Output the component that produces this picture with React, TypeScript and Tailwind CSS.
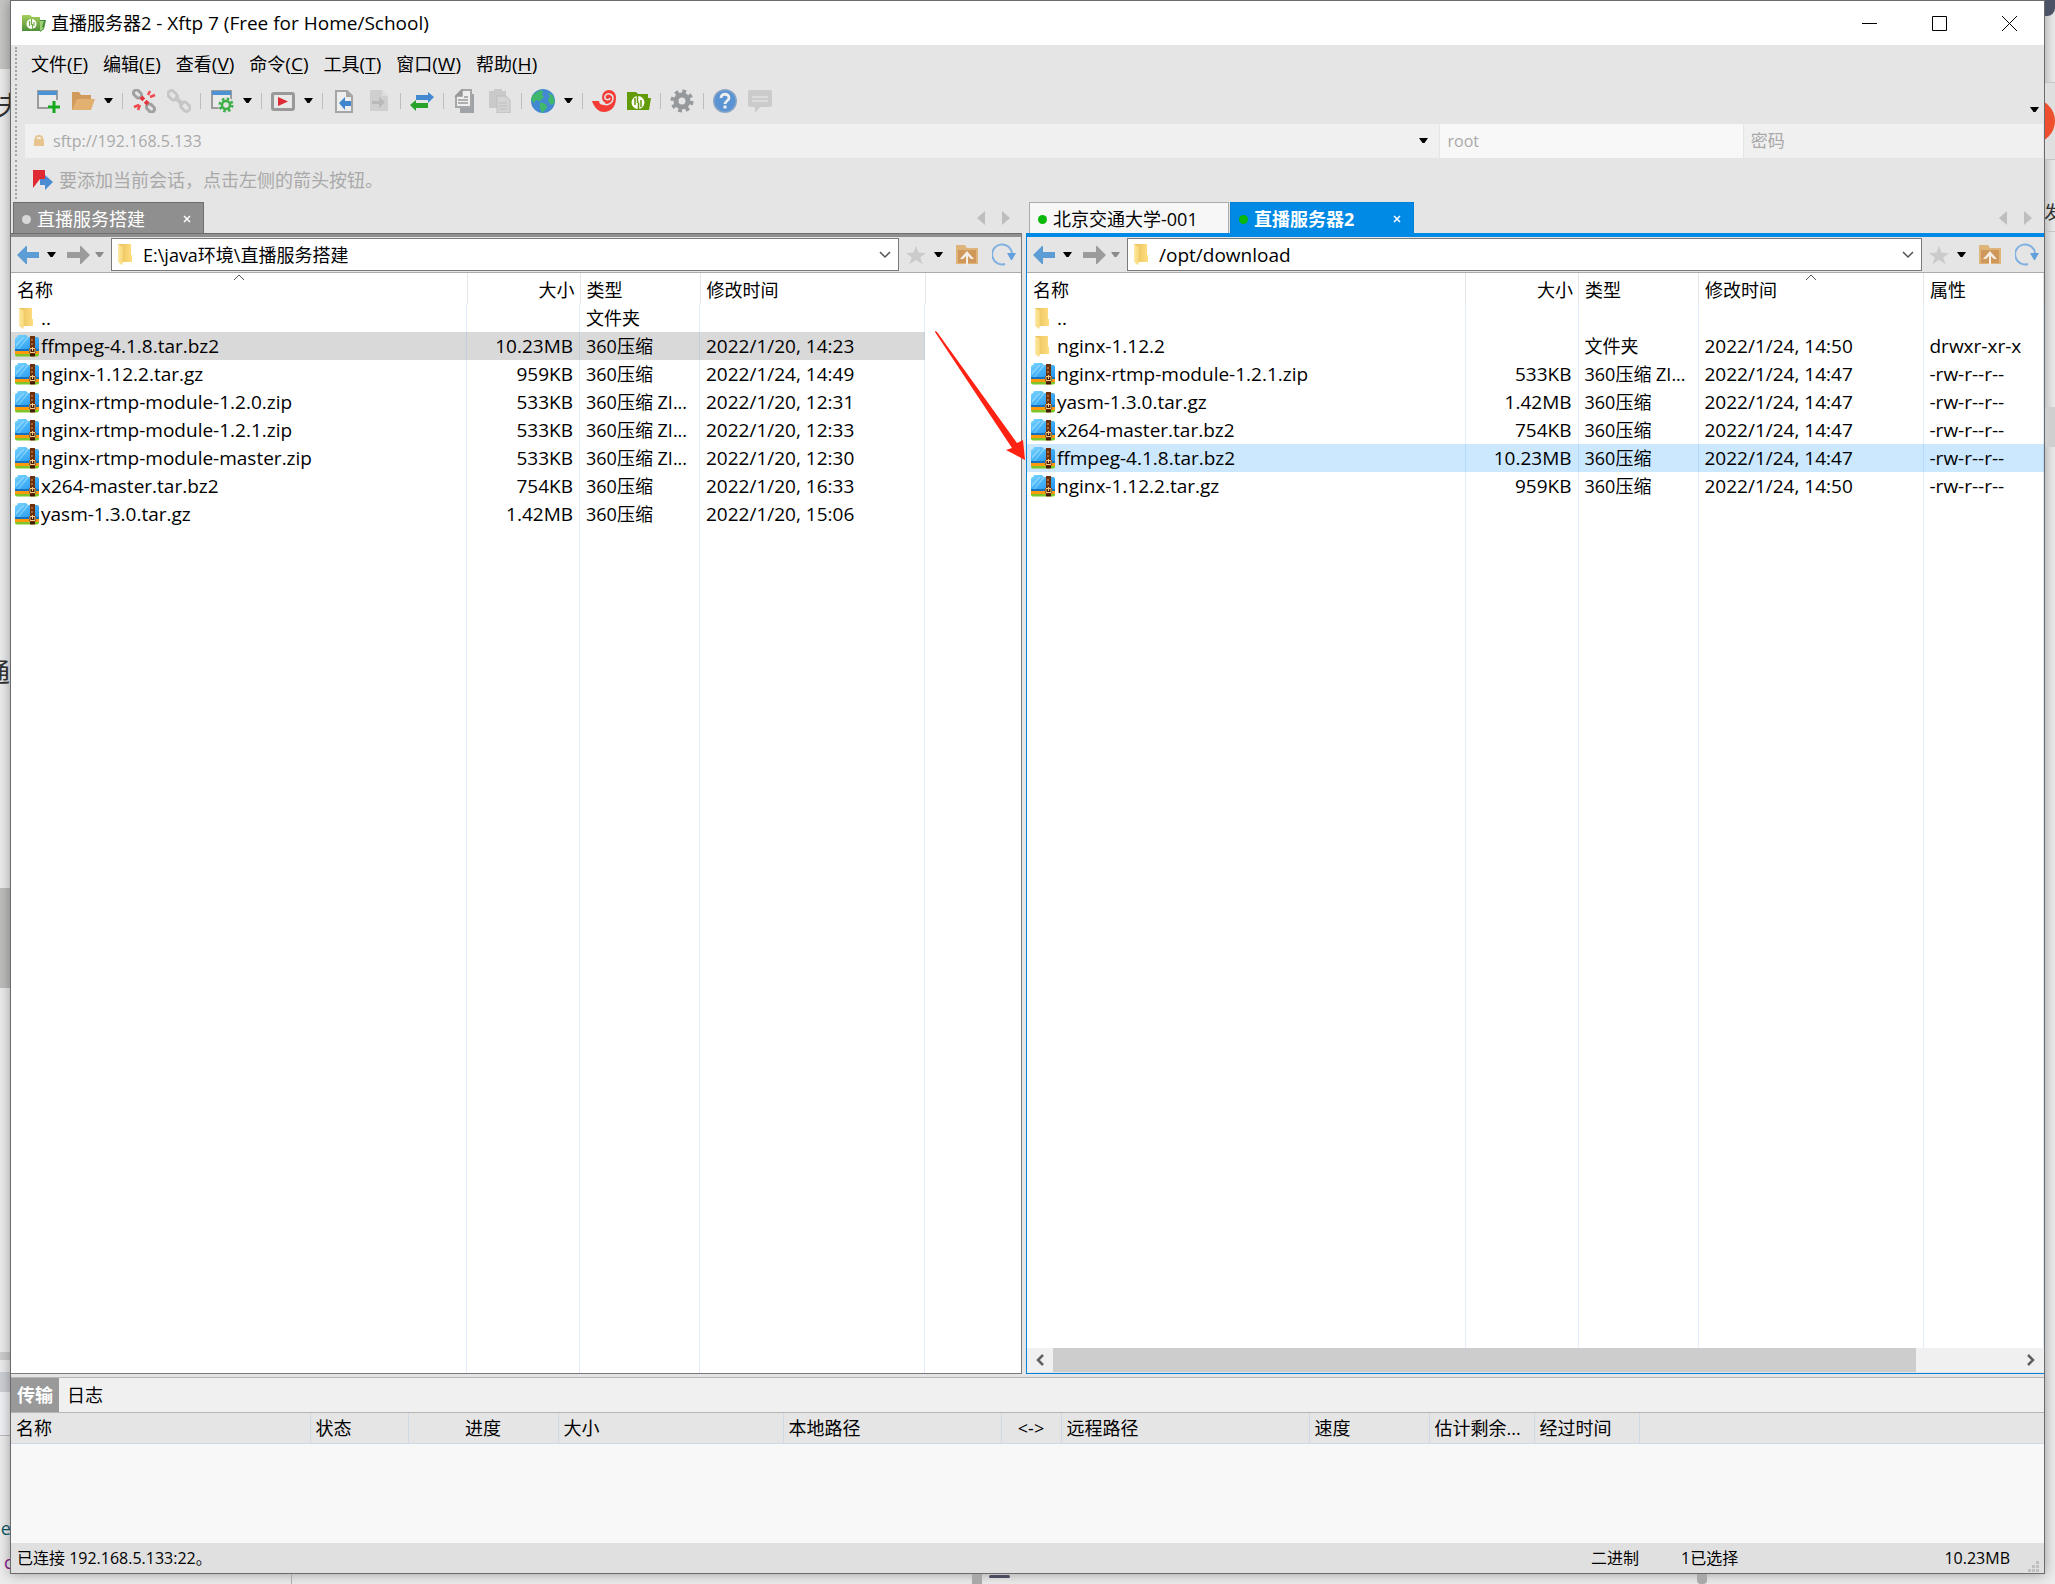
import type { ReactNode } from 'react';
import clsx from 'clsx';

type FileKind = 'folder' | 'archive';

interface FileEntry {
  name: string;
  kind: FileKind;
  size?: string;
  type?: string;
  modified?: string;
  attrs?: string;
  selected?: boolean;
}

const localFiles: FileEntry[] = [
  { name: '..', kind: 'folder', type: '文件夹' },
  { name: 'ffmpeg-4.1.8.tar.bz2', kind: 'archive', size: '10.23MB', type: '360压缩', modified: '2022/1/20, 14:23', selected: true },
  { name: 'nginx-1.12.2.tar.gz', kind: 'archive', size: '959KB', type: '360压缩', modified: '2022/1/24, 14:49' },
  { name: 'nginx-rtmp-module-1.2.0.zip', kind: 'archive', size: '533KB', type: '360压缩 ZI...', modified: '2022/1/20, 12:31' },
  { name: 'nginx-rtmp-module-1.2.1.zip', kind: 'archive', size: '533KB', type: '360压缩 ZI...', modified: '2022/1/20, 12:33' },
  { name: 'nginx-rtmp-module-master.zip', kind: 'archive', size: '533KB', type: '360压缩 ZI...', modified: '2022/1/20, 12:30' },
  { name: 'x264-master.tar.bz2', kind: 'archive', size: '754KB', type: '360压缩', modified: '2022/1/20, 16:33' },
  { name: 'yasm-1.3.0.tar.gz', kind: 'archive', size: '1.42MB', type: '360压缩', modified: '2022/1/20, 15:06' },
];

const remoteFiles: FileEntry[] = [
  { name: '..', kind: 'folder' },
  { name: 'nginx-1.12.2', kind: 'folder', type: '文件夹', modified: '2022/1/24, 14:50', attrs: 'drwxr-xr-x' },
  { name: 'nginx-rtmp-module-1.2.1.zip', kind: 'archive', size: '533KB', type: '360压缩 ZI...', modified: '2022/1/24, 14:47', attrs: '-rw-r--r--' },
  { name: 'yasm-1.3.0.tar.gz', kind: 'archive', size: '1.42MB', type: '360压缩', modified: '2022/1/24, 14:47', attrs: '-rw-r--r--' },
  { name: 'x264-master.tar.bz2', kind: 'archive', size: '754KB', type: '360压缩', modified: '2022/1/24, 14:47', attrs: '-rw-r--r--' },
  { name: 'ffmpeg-4.1.8.tar.bz2', kind: 'archive', size: '10.23MB', type: '360压缩', modified: '2022/1/24, 14:47', attrs: '-rw-r--r--', selected: true },
  { name: 'nginx-1.12.2.tar.gz', kind: 'archive', size: '959KB', type: '360压缩', modified: '2022/1/24, 14:50', attrs: '-rw-r--r--' },
];

const menus = [
  { label: '文件', accessKey: 'F' },
  { label: '编辑', accessKey: 'E' },
  { label: '查看', accessKey: 'V' },
  { label: '命令', accessKey: 'C' },
  { label: '工具', accessKey: 'T' },
  { label: '窗口', accessKey: 'W' },
  { label: '帮助', accessKey: 'H' },
];

const transferColumns = [
  { label: '名称', width: 'w-[299px]' },
  { label: '状态', width: 'w-[98px]' },
  { label: '进度', width: 'w-[150px]', center: true },
  { label: '大小', width: 'w-[225px]' },
  { label: '本地路径', width: 'w-[218px]' },
  { label: '<->', width: 'w-[60px]', center: true },
  { label: '远程路径', width: 'w-[248px]' },
  { label: '速度', width: 'w-[120px]' },
  { label: '估计剩余...', width: 'w-[105px]' },
  { label: '经过时间', width: 'w-[105px]' },
];

/* ---------- icons ---------- */

function Icon({ children, className = 'h-6 w-6' }: { children: ReactNode; className?: string }) {
  return (
    <svg viewBox="0 0 24 24" className={clsx('shrink-0', className)} aria-hidden="true">
      {children}
    </svg>
  );
}

function SharedGradients() {
  return (
    <svg className="absolute h-0 w-0" aria-hidden="true">
      <defs>
        <linearGradient id="folder-front" x1="0" x2="1">
          <stop offset="0" stopColor="#ffeaa6" />
          <stop offset="1" stopColor="#f6d574" />
        </linearGradient>
        <linearGradient id="folder-back" x1="0" x2="1">
          <stop offset="0" stopColor="#e8bf58" />
          <stop offset="1" stopColor="#ffdd80" />
        </linearGradient>
        <linearGradient id="zip-blue" x1="0" y1="0" x2="1" y2="1">
          <stop offset="0" stopColor="#7dd6ff" />
          <stop offset="0.5" stopColor="#45b2f7" />
          <stop offset="1" stopColor="#2393ee" />
        </linearGradient>
        <linearGradient id="app-green" x1="0" y1="0" x2="0" y2="1">
          <stop offset="0" stopColor="#a5cf5a" />
          <stop offset="1" stopColor="#4f8f3a" />
        </linearGradient>
      </defs>
    </svg>
  );
}

function FolderIcon() {
  return (
    <svg viewBox="0 0 15 21" className="h-[21px] w-[15px] shrink-0" aria-hidden="true">
      <path d="M0 0h13v11h1v7H4z" fill="url(#folder-back)" />
      <path d="M0 0l5 3v15l-1 3-4-3z" fill="url(#folder-front)" />
    </svg>
  );
}

function ArchiveIcon() {
  return (
    <svg viewBox="0 0 24 22" className="h-[22px] w-6 shrink-0" aria-hidden="true">
      <path d="M0 18h24v1.500a2 2 0 0 1-2 2H2a2 2 0 0 1-2-2z" fill="#7cc52b" />
      <path d="M0 15h24v4H0z" fill="#ff9a0c" />
      <path d="M0 14h24v2H0z" fill="#1670bd" />
      <path d="M2 2l1-2h8l2 2h9a2 2 0 0 1 2 2v10H0V4a2 2 0 0 1 2-2z" fill="url(#zip-blue)" />
      <path d="M10 2L1 12V9l7-7zM14 2L4 14H3L12 2z" fill="#a5e2ff" opacity="0.6" />
      <path d="M15 1h5v20.500h-5z" fill="#6e2f0b" />
      <path d="M16 4h2v2h-2zM16 8h2v2h-2z" fill="#a86536" />
      <path d="M14 13h7v5h-7z" fill="#4a1c05" />
      <path d="M15 13.500h5v4h-5zM17.500 12v4" fill="none" stroke="#f5d088" />
      <path d="M15 19h5v2h-5z" fill="#431803" />
    </svg>
  );
}

function AppIcon() {
  return (
    <Icon>
      <path d="M0 5a1 1 0 0 1 1-1h7l2 2h8v14H0z" fill="url(#app-green)" />
      <path d="M18 9h6l-2 9-4 3z" fill="#3f8b34" />
      <path d="M18 10h4l-2 6 2 1-4 3z" fill="#9fd077" />
      <circle cx="9.500" cy="13" r="5" fill="#fff" />
      <path d="M7.500 10v5M9.500 8v6M10.500 13v5M12 11v4" stroke="#72a946" strokeWidth="1.200" />
    </Icon>
  );
}

function NewSessionIcon() {
  return (
    <Icon>
      <rect x="2" y="2" width="19" height="17" fill="#eaeaea" stroke="#9b9b9b" strokeWidth="2" />
      <path d="M2 2h19v4H2z" fill="#4c93d3" />
      <path d="M14 11h10v13H12v-8z" fill="#e5e5e5" />
      <path d="M18 12v12M12 18h12" stroke="#16a920" strokeWidth="3" />
    </Icon>
  );
}

function OpenFolderIcon() {
  return (
    <Icon>
      <path d="M1 3h7l2 3h10v15H1z" fill="#d19c5b" />
      <path d="M6 10h18l-4 11H1z" fill="#e2b06f" />
    </Icon>
  );
}

function DisconnectIcon() {
  return (
    <Icon>
      <rect x="1" y="2" width="9" height="6" rx="3" transform="rotate(45 5.500 5)" fill="none" stroke="#a0a0a0" strokeWidth="3" />
      <rect x="14" y="16" width="9" height="6" rx="3" transform="rotate(45 18.500 19)" fill="none" stroke="#a0a0a0" strokeWidth="3" />
      <path d="M9 8l7 7" stroke="#e5343b" strokeWidth="4" strokeDasharray="4 2" />
      <path d="M16 6l2-4M18 8l5-2M8 16l-2 5M7 16l-5 2" stroke="#ee4a4f" strokeWidth="2.500" />
    </Icon>
  );
}

function ReconnectIcon() {
  return (
    <Icon>
      <rect x="1" y="3" width="10" height="7" rx="3" transform="rotate(45 6 6)" fill="none" stroke="#c6c6c6" strokeWidth="3" />
      <rect x="13" y="14" width="10" height="7" rx="3" transform="rotate(45 18 18)" fill="none" stroke="#c6c6c6" strokeWidth="3" />
      <path d="M8 8l8 8" stroke="#c6c6c6" strokeWidth="4" />
    </Icon>
  );
}

function SessionPropertiesIcon() {
  return (
    <Icon>
      <rect x="2" y="2" width="19" height="17" fill="#eaeaea" stroke="#9b9b9b" strokeWidth="2" />
      <path d="M2 2h19v4H2z" fill="#4c93d3" />
      <circle cx="16" cy="16" r="8" fill="#e5e5e5" />
      <circle cx="16" cy="16" r="4" fill="#e5e5e5" stroke="#3fb049" strokeWidth="2.500" />
      <circle cx="16" cy="16" r="6" fill="none" stroke="#3fb049" strokeWidth="3" strokeDasharray="2.400 2.310" />
    </Icon>
  );
}

function PlayIcon() {
  return (
    <Icon>
      <rect x="1.500" y="4.500" width="21" height="16" rx="1.500" fill="#e8e8e8" stroke="#999" strokeWidth="3" />
      <path d="M7 8l10 4.500L7 17z" fill="#e02a33" />
    </Icon>
  );
}

function DocLeftIcon() {
  return (
    <Icon>
      <path d="M4 2h11l5 5v16H4z" fill="#eee" stroke="#a5a5a5" strokeWidth="2" />
      <path d="M14 2v6h6z" fill="#a5a5a5" />
      <path d="M7 14l6-6v4h6v5h-6v4z" fill="#3f86cf" />
    </Icon>
  );
}

function DocRightIcon() {
  return (
    <Icon>
      <path d="M3 1h12l6 6v15H3z" fill="#cfcfcf" />
      <path d="M15 1v6h6z" fill="#dedede" />
      <path d="M18 13l-6-5v4H5v3h7v4z" fill="#b9b9b9" />
    </Icon>
  );
}

function TransferIcon() {
  return (
    <Icon>
      <path d="M24 8l-6-5v3H6v5h12v3z" fill="#4389d1" />
      <path d="M0 16l6-5v3h12v5H6v3z" fill="#27a22b" />
    </Icon>
  );
}

function CopyIcon() {
  return (
    <Icon>
      <path d="M7 5h14v19H7z" fill="#9fa2a6" />
      <path d="M9 1h9v17H3V7z" fill="#eee" stroke="#a4a6a8" strokeWidth="2" />
      <path d="M9 1v6H3zM5 11h10M5 14h10M11 8h4" stroke="#999" strokeWidth="1.500" fill="#999" />
    </Icon>
  );
}

function PasteIcon() {
  return (
    <Icon>
      <path d="M1 2h5V0h8v2h4v17H1z" fill="#c9c9c9" />
      <path d="M9 7h9l4 4v13H9z" fill="#d4d4d4" stroke="#bdbdbd" />
      <path d="M11 14h8M11 17h8M11 20h8" stroke="#bdbdbd" />
    </Icon>
  );
}

function GlobeIcon() {
  return (
    <Icon>
      <circle cx="12" cy="12" r="12" fill="#4389d1" />
      <path d="M3 5l6-4 3 1-1 4 2 2-4 4-4-1-2 3-3-3 1-4zM17 3l5 4 2 6-3 3-3-2-1-4 2-2zM9 13l6 2 1 4-5 5-2-5z" fill="#3fb86b" />
    </Icon>
  );
}

function SwirlIcon() {
  return (
    <Icon>
      <path d="M0 12h7c0 3 3 5 6 3l10-9c3 9-3 17-11 17C6 23 2 18 0 12z" fill="#f43c37" />
      <circle cx="17" cy="8" r="7" fill="#f43c37" />
      <path d="M10 14c5 4 11 0 11-5 0-4-6-6-8-2-1 4 4 5 5 2" fill="none" stroke="#e5e5e5" strokeWidth="1.500" />
    </Icon>
  );
}

function XftpIcon() {
  return (
    <Icon>
      <path d="M0 3h9l2 2h10v4h3l-2 12H0z" fill="#639a08" />
      <circle cx="11" cy="13.500" r="6.500" fill="#fff" />
      <path d="M8 9v7M10.500 7v7M11.500 13.500v7M14 11v7" stroke="#639a08" strokeWidth="1.500" />
    </Icon>
  );
}

function GearIcon() {
  return (
    <Icon>
      <circle cx="12" cy="12" r="6" fill="none" stroke="#96999c" strokeWidth="5" />
      <circle cx="12" cy="12" r="9.500" fill="none" stroke="#96999c" strokeWidth="4" strokeDasharray="3.700 3.760" />
    </Icon>
  );
}

function HelpIcon() {
  return (
    <Icon>
      <circle cx="12" cy="12" r="12" fill="#8ba6c4" />
      <circle cx="12" cy="12" r="10.500" fill="#5b94d4" />
      <path d="M8 9c0-5 8-5 8 0 0 3-4 3-4 6" fill="none" stroke="#eee" strokeWidth="2.800" />
      <path d="M10.500 16.500h3v3h-3z" fill="#eee" />
    </Icon>
  );
}

function MessageIcon() {
  return (
    <Icon>
      <path d="M2 1h20a2 2 0 0 1 2 2v13a2 2 0 0 1-2 2H12l-5 6v-6H2a2 2 0 0 1-2-2V3a2 2 0 0 1 2-2z" fill="#cbcbcb" />
      <path d="M4 8h16M4 12h16" stroke="#dcdcdc" strokeWidth="2" />
    </Icon>
  );
}

function Caret({ className = 'text-black' }: { className?: string }) {
  return (
    <svg viewBox="0 0 10 6" className={clsx('h-[6px] w-[10px] shrink-0', className)} aria-hidden="true">
      <path d="M0 0h9L5.500 5h-2z" fill="currentColor" />
    </svg>
  );
}

function BackIcon() {
  return (
    <svg viewBox="0 0 22 18" className="h-[18px] w-[22px]" aria-hidden="true">
      <path d="M0 9l9-9h1v6h12v6H10v6H9z" fill="#5c9dd5" />
    </svg>
  );
}

function ForwardIcon() {
  return (
    <svg viewBox="0 0 23 18" className="h-[18px] w-[23px]" aria-hidden="true">
      <path d="M23 9l-9-9h-1v6H0v6h13v6h1z" fill="#9b9b9b" />
    </svg>
  );
}

function StarIcon() {
  return (
    <Icon className="h-5 w-5">
      <path d="M12 1l3 8 9 1-7 5 3 8-8-5-8 5 3-8-7-5 9-1z" fill="#cbcbcb" />
    </Icon>
  );
}

function FolderUpIcon() {
  return (
    <svg viewBox="0 0 22 20" className="h-5 w-[22px]" aria-hidden="true">
      <path d="M0 0h9l2 3h11v16H0z" fill="#dfb47a" />
      <path d="M2 5h18v13H2z" fill="#d0975a" />
      <path d="M11 6l7 8h-3l-3-3v9h-2v-9l-3 3H4z" fill="#f3eee6" />
    </svg>
  );
}

function RefreshIcon() {
  return (
    <Icon className="h-6 w-6">
      <path d="M13 21a10 10 0 1 1 7-11" fill="none" stroke="#7fb0e0" strokeWidth="2" />
      <path d="M15 10h9l-4 7h-1z" fill="#61a0dd" />
    </Icon>
  );
}

/* ---------- toolbar ---------- */

function Grip() {
  return <span className="my-[2px] ml-1 w-0 shrink-0 self-stretch border-l-2 border-dotted border-[#a3a3a3]" />;
}

function ToolGroup({ children, last }: { children: ReactNode; last?: boolean }) {
  return (
    <div className="flex items-center">
      <div className="flex items-center gap-[11px]">{children}</div>
      {!last && <span className="mx-[9px] h-4 w-px bg-[#bdbdbd]" />}
    </div>
  );
}

function ToolButton({ label, menu, children }: { label: string; menu?: boolean; children: ReactNode }) {
  return (
    <button type="button" title={label} className="flex h-6 items-center">
      {children}
      {menu && (
        <span className="-mr-px flex w-[19px] justify-end">
          <Caret />
        </span>
      )}
    </button>
  );
}

function Toolbar() {
  return (
    <div className="flex h-[42px]">
      <Grip />
      <div className="flex flex-1 items-center pb-1 pl-[19px]">
        <ToolGroup>
          <ToolButton label="新建"><NewSessionIcon /></ToolButton>
          <ToolButton label="打开" menu><OpenFolderIcon /></ToolButton>
        </ToolGroup>
        <ToolGroup>
          <ToolButton label="断开"><DisconnectIcon /></ToolButton>
          <ToolButton label="重新连接"><ReconnectIcon /></ToolButton>
        </ToolGroup>
        <ToolGroup>
          <ToolButton label="会话属性" menu><SessionPropertiesIcon /></ToolButton>
        </ToolGroup>
        <ToolGroup>
          <ToolButton label="运行" menu><PlayIcon /></ToolButton>
        </ToolGroup>
        <ToolGroup>
          <ToolButton label="传输到左侧"><DocLeftIcon /></ToolButton>
          <ToolButton label="传输到右侧"><DocRightIcon /></ToolButton>
        </ToolGroup>
        <ToolGroup>
          <ToolButton label="同步"><TransferIcon /></ToolButton>
        </ToolGroup>
        <ToolGroup>
          <ToolButton label="复制"><CopyIcon /></ToolButton>
          <ToolButton label="粘贴"><PasteIcon /></ToolButton>
        </ToolGroup>
        <ToolGroup>
          <ToolButton label="编码" menu><GlobeIcon /></ToolButton>
        </ToolGroup>
        <ToolGroup>
          <ToolButton label="Xshell"><SwirlIcon /></ToolButton>
          <ToolButton label="Xftp"><XftpIcon /></ToolButton>
        </ToolGroup>
        <ToolGroup>
          <ToolButton label="选项"><GearIcon /></ToolButton>
        </ToolGroup>
        <ToolGroup last>
          <ToolButton label="帮助"><HelpIcon /></ToolButton>
          <ToolButton label="反馈"><MessageIcon /></ToolButton>
        </ToolGroup>
      </div>
      <button type="button" title="更多" className="self-end px-1 pb-[11px]">
        <Caret />
      </button>
    </div>
  );
}

function AddressBar() {
  return (
    <div className="flex h-[34px] text-[16px] text-[#a9a9a9]">
      <Grip />
      <div className="ml-2 mr-px flex flex-1 gap-px">
        <div className="flex flex-[1418] items-center bg-[#f0f0f0] pl-[9px] pr-[10px]">
          <svg viewBox="0 0 10 12" className="h-3 w-[10px]" aria-hidden="true">
            <path d="M2 5V3a3 2 0 0 1 6 0v2" fill="none" stroke="#e8c48f" strokeWidth="2" />
            <path d="M0 4h10v7H0z" fill="#e8c48f" />
          </svg>
          <input aria-label="主机地址" defaultValue="sftp://192.168.5.133" className="ml-[9px] min-w-0 flex-1 bg-transparent outline-none" />
          <button type="button" title="历史记录">
            <Caret />
          </button>
        </div>
        <input aria-label="用户名" defaultValue="root" className="min-w-0 flex-[300] bg-[#f8f8f8] pl-[7px] outline-none" />
        <input
          aria-label="密码"
          type="password"
          placeholder="密码"
          className="min-w-0 flex-[297] bg-[#f0f0f0] pl-[7px] text-[17px] outline-none placeholder:text-[#a9a9a9]"
        />
      </div>
    </div>
  );
}

/* ---------- file panes ---------- */

interface Tab {
  title: string;
  active?: boolean;
}

function TabArrows() {
  return (
    <div className="ml-auto flex items-center gap-[17px] pr-3">
      <button type="button" title="上一个标签">
        <svg viewBox="0 0 8 14" className="h-[14px] w-2" aria-hidden="true"><path d="M8 0v14L0 7z" fill="#bebebe" /></svg>
      </button>
      <button type="button" title="下一个标签">
        <svg viewBox="0 0 8 14" className="h-[14px] w-2" aria-hidden="true"><path d="M0 0v14l8-7z" fill="#bebebe" /></svg>
      </button>
    </div>
  );
}

function TabStrip({ tabs, remote }: { tabs: Tab[]; remote?: boolean }) {
  return (
    <div className={clsx('flex h-[31px] gap-px', remote ? 'pl-[3px]' : 'pl-[2px]')}>
      {tabs.map((tab) => (
        <button
          key={tab.title}
          type="button"
          className={clsx(
            'flex items-center border border-b-0 pl-2 pt-[2px] text-left',
            !remote && 'w-[191px] border-[#6e6e6e] bg-[#8f8f8f] text-white',
            remote && tab.active && 'w-[184px] border-[#007fd4] bg-[#008ae5] font-bold text-white',
            remote && !tab.active && 'w-[200px] border-[#ababab] bg-[#f7f7f7]',
          )}
        >
          <span className={clsx('h-[9px] w-[9px] rounded-full', remote ? 'bg-[#0ab80a]' : 'bg-[#d8d8d8]')} />
          <span className="ml-[6px]">{tab.title}</span>
          {tab.active && (
            <svg viewBox="0 0 8 8" className="ml-auto mr-3 h-2 w-2" aria-hidden="true">
              <path d="M1 1l6 6M7 1L1 7" stroke="#fff" strokeWidth="1.500" />
            </svg>
          )}
        </button>
      ))}
      <TabArrows />
    </div>
  );
}

function PathBar({ path, label, latin }: { path: string; label: string; latin?: boolean }) {
  return (
    <div className="flex h-9 items-center border-b border-[#ababab] bg-[#e5e5e5] pl-[6px]">
      <div className="flex w-[94px] items-center">
        <button type="button" title="后退"><BackIcon /></button>
        <button type="button" title="后退历史" className="ml-2"><Caret /></button>
        <button type="button" title="前进" className="ml-[10px]"><ForwardIcon /></button>
        <button type="button" title="前进历史" className="ml-[5px]"><Caret className="text-[#8a8a8a]" /></button>
      </div>
      <div className="flex h-[33px] flex-1 items-center border border-[#7a7a7a] bg-white pl-[6px] pr-[7px]">
        <FolderIcon />
        <input
          aria-label={label}
          defaultValue={path}
          className={clsx('ml-[10px] min-w-0 flex-1 bg-transparent outline-none', latin && 'text-[19px]')}
        />
        <button type="button" title="展开">
          <svg viewBox="0 0 12 8" className="h-2 w-3" aria-hidden="true">
            <path d="M1 1l5 5 5-5" fill="none" stroke="#555" strokeWidth="1.500" />
          </svg>
        </button>
      </div>
      <div className="flex w-[122px] items-center pl-[7px]">
        <button type="button" title="收藏"><StarIcon /></button>
        <button type="button" title="收藏夹" className="ml-2"><Caret /></button>
        <button type="button" title="上级目录" className="ml-3"><FolderUpIcon /></button>
        <button type="button" title="刷新" className="ml-[14px]"><RefreshIcon /></button>
      </div>
    </div>
  );
}

function SortMark() {
  return (
    <svg viewBox="0 0 12 6" className="absolute left-1/2 top-px h-[6px] w-3 -translate-x-1/2" aria-hidden="true">
      <path d="M1 6l5-5 5 5" fill="none" stroke="#555" />
    </svg>
  );
}

const headCell = 'relative border-r border-[#e5e5e5] pt-[2px] font-normal';

function FileTable({ files, remote }: { files: FileEntry[]; remote?: boolean }) {
  const guides = remote
    ? 'grid-cols-[minmax(0,1fr)_113px_120px_225px_120px]'
    : 'grid-cols-[456px_113px_120px_225px]';
  return (
    <div className="grid flex-1 grid-cols-1 bg-white">
      <table className={clsx('table-fixed self-start [grid-area:1/1]', remote ? 'w-full' : 'w-[914px]')}>
        <colgroup>
          <col className={remote ? '' : 'w-[456px]'} />
          <col className="w-[113px]" />
          <col className="w-[120px]" />
          <col className="w-[225px]" />
          {remote && <col className="w-[120px]" />}
        </colgroup>
        <thead>
          <tr className="h-[31px]">
            <th scope="col" className={clsx(headCell, 'pl-[6px] text-left')}>名称{!remote && <SortMark />}</th>
            <th scope="col" className={clsx(headCell, 'pr-[5px] text-right')}>大小</th>
            <th scope="col" className={clsx(headCell, 'pl-[6px] text-left')}>类型</th>
            <th scope="col" className={clsx(headCell, 'pl-[6px] text-left')}>修改时间{remote && <SortMark />}</th>
            {remote && <th scope="col" className={clsx(headCell, 'pl-[6px] text-left')}>属性</th>}
          </tr>
        </thead>
        <tbody className="text-[19px]">
          {files.map((file) => (
            <tr key={file.name} className={clsx('h-7 whitespace-nowrap', file.selected && (remote ? 'bg-[#cce8ff]' : 'bg-[#d9d9d9]'))}>
              <td>
                <div className="flex items-center">
                  <span className={clsx('flex w-[30px] items-center', file.kind === 'folder' ? 'pl-2' : 'pl-1')}>
                    {file.kind === 'folder' ? <FolderIcon /> : <ArchiveIcon />}
                  </span>
                  {file.name}
                </div>
              </td>
              <td className="pr-[7px] text-right">{file.size}</td>
              <td className="pl-[6px] text-[18px]">{file.type}</td>
              <td className="pl-[6px]">{file.modified}</td>
              {remote && <td className="pl-[6px]">{file.attrs}</td>}
            </tr>
          ))}
        </tbody>
      </table>
      {/* column guides run down to the bottom of the list */}
      <div className={clsx('pointer-events-none mt-[31px] grid [grid-area:1/1]', guides)} aria-hidden="true">
        {(remote ? [0, 1, 2, 3, 4] : [0, 1, 2, 3]).map((n) => (
          <span key={n} className="border-r border-[#6aa5e6]/20" />
        ))}
      </div>
    </div>
  );
}

function ScrollBar() {
  return (
    <div className="mb-px flex h-6 bg-[#f0f0f0]">
      <button type="button" title="向左滚动" className="flex w-[26px] items-center justify-center">
        <svg viewBox="0 0 10 12" className="h-3 w-[10px]" aria-hidden="true">
          <path d="M8 1L3 6l5 5" fill="none" stroke="#606060" strokeWidth="2.500" />
        </svg>
      </button>
      <span className="flex-[863] bg-[#cdcdcd]" />
      <span className="flex-[102]" />
      <button type="button" title="向右滚动" className="flex w-[26px] items-center justify-center">
        <svg viewBox="0 0 10 12" className="h-3 w-[10px]" aria-hidden="true">
          <path d="M2 1l5 5-5 5" fill="none" stroke="#606060" strokeWidth="2.500" />
        </svg>
      </button>
    </div>
  );
}

function LocalPane() {
  return (
    <section className="flex min-w-0 flex-col">
      <TabStrip tabs={[{ title: '直播服务搭建', active: true }]} />
      <div className="flex flex-1 flex-col border-b border-r border-[#7a7a7a]">
        <div className="h-1 border-t border-[#6e6e6e] bg-[#8f8f8f]" />
        <PathBar path={'E:\\java环境\\直播服务搭建'} label="本地路径" />
        <FileTable files={localFiles} />
      </div>
    </section>
  );
}

function RemotePane() {
  return (
    <section className="relative flex min-w-0 flex-col">
      <TabStrip remote tabs={[{ title: '北京交通大学-001' }, { title: '直播服务器2', active: true }]} />
      <div className="flex flex-1 flex-col border-b border-l border-[#0086d8]">
        <div className="h-1 bg-[#008ae5]" />
        <PathBar path="/opt/download" label="远程路径" latin />
        <FileTable files={remoteFiles} remote />
        <ScrollBar />
      </div>
      {/* red pointer drawn over both panes */}
      <svg viewBox="0 0 92 132" className="pointer-events-none absolute -left-[92px] top-[128px] h-[132px] w-[92px]" aria-hidden="true">
        <path d="M1 1l2 1 80 111 6-3 2 20-19-10 6-2L1 2z" fill="#ff2212" />
      </svg>
    </section>
  );
}

/* ---------- transfer panel ---------- */

function TransferPanel() {
  return (
    <section className="border-t border-[#b5b5b5]">
      <div className="flex h-[34px] bg-[#f0f0f0]">
        <button type="button" className="w-12 bg-[#999] font-bold text-white">传输</button>
        <button type="button" className="px-2">日志</button>
      </div>
      <div className="h-[131px] overflow-hidden border-t border-[#b5b5b5] bg-[#f8f8f8]">
        <table className="w-full table-fixed">
          <thead>
            <tr className="h-[30px] border-b border-[#cfd8e6] bg-[#e5e5e5]">
              {transferColumns.map((col) => (
                <th
                  key={col.label}
                  scope="col"
                  className={clsx('border-r border-[#cfd8e6] px-[5px] font-normal', col.width, col.center ? 'text-center' : 'text-left')}
                >
                  {col.label}
                </th>
              ))}
              <th aria-hidden="true" />
            </tr>
          </thead>
        </table>
      </div>
    </section>
  );
}

function StatusBar() {
  return (
    <footer className="flex h-[30px] items-center bg-[#e0e0e0] pl-[6px] text-[16px]">
      <span className="flex-1">已连接 192.168.5.133:22。</span>
      <span className="w-[90px]">二进制</span>
      <span className="w-[200px]">1已选择</span>
      <span className="w-[129px] text-right">10.23MB</span>
      <svg viewBox="0 0 12 12" className="ml-[18px] mr-1 h-3 w-3 self-end" aria-hidden="true">
        <path d="M8 0h3v3H8zM8 4h3v3H8zM4 4h3v3H4zM8 8h3v3H8zM4 8h3v3H4zM0 8h3v3H0z" fill="#bfbfbf" />
      </svg>
    </footer>
  );
}

function TitleBar() {
  return (
    <header className="flex h-11 items-center bg-white pl-[11px]">
      <AppIcon />
      <h1 className="ml-[5px] flex-1">
        直播服务器2<span className="text-[19px]"> - Xftp 7 (Free for Home/School)</span>
      </h1>
      <button type="button" title="最小化" className="flex h-full w-[70px] items-center justify-center">
        <svg viewBox="0 0 15 15" className="h-[15px] w-[15px]" aria-hidden="true"><path d="M0 7.500h15" stroke="#000" /></svg>
      </button>
      <button type="button" title="最大化" className="flex h-full w-[70px] items-center justify-center">
        <svg viewBox="0 0 15 15" className="h-[15px] w-[15px]" aria-hidden="true"><path d="M.5.5h14v14H.5z" fill="none" stroke="#000" /></svg>
      </button>
      <button type="button" title="关闭" className="flex h-full w-[70px] items-center justify-center">
        <svg viewBox="0 0 15 15" className="h-[15px] w-[15px]" aria-hidden="true"><path d="M0 0l15 15M15 0L0 15" stroke="#000" /></svg>
      </button>
    </header>
  );
}

/* slivers of the desktop on either side of the window */

function DesktopLeft() {
  return (
    <div className="flex flex-col overflow-hidden whitespace-nowrap" aria-hidden="true">
      <div className="h-[69px] bg-[#c6c6c4]" />
      <div className="-ml-[3px] mt-[18px] h-9 text-[26px] leading-9 text-[#333]">夫</div>
      <div className="-ml-4 mt-[531px] h-9 text-[26px] leading-9 text-[#333]">通</div>
      <div className="mt-[198px] h-[100px] bg-[#bebebc]" />
      <div className="mt-[364px] h-2 bg-[#cdcdcd]" />
      <div className="mt-3 h-5 bg-[#cdd0d6]" />
      <div className="h-11 border-b border-[#bbb] bg-[#f0f1f4]" />
      <div className="-ml-1 mt-20 h-6 leading-6 text-[#0e5a6b]">.e</div>
      <div className="ml-1 mt-3 h-5 leading-5 text-[#8a1a8a]">c</div>
    </div>
  );
}

function DesktopRight() {
  return (
    <div className="flex flex-col overflow-hidden whitespace-nowrap" aria-hidden="true">
      <div className="h-4 rounded-br-lg bg-[#4d5366]" />
      <div className="mt-[66px] flex h-[78px] items-center border-y border-[#c4c4c4] bg-[#dfdfdf]">
        <div className="-ml-[34px] h-11 w-11 shrink-0 rounded-full bg-[#ee4f2e]" />
      </div>
      <div className="-ml-px mt-9 h-9 border-b border-[#c4c4c4] leading-8 text-[#333]">发</div>
      <div className="mt-[175px] h-10 bg-[#cfcfcf]" />
    </div>
  );
}

export default function App() {
  return (
    <div className="flex min-h-screen flex-col bg-[#ececec] font-['Open_Sans','Noto_Sans_CJK_SC',sans-serif] text-[18px] leading-7 text-black">
      <SharedGradients />
      <div className="grid flex-1 grid-cols-[10px_minmax(0,1fr)_10px]">
        <DesktopLeft />
        <main className="flex flex-col border border-[#6b6b6b] bg-[#e5e5e5] shadow-[0_0_12px_rgba(0,0,0,0.35)]">
          <TitleBar />
          <nav className="flex h-[37px]">
            <Grip />
            <div className="flex items-center gap-[15px] pl-[14px]">
              {menus.map((menu) => (
                <button key={menu.label} type="button">
                  {menu.label}
                  <span className="text-[19px]">(<u className="underline-offset-2">{menu.accessKey}</u>)</span>
                </button>
              ))}
            </div>
          </nav>
          <Toolbar />
          <AddressBar />
          <div className="mb-px flex h-[43px] text-[#a9a9a9]">
            <Grip />
            <button type="button" className="flex items-center gap-[6px] pl-4">
              <svg viewBox="0 0 20 20" className="h-5 w-5" aria-hidden="true">
                <path d="M0 0h12v12l-5-3-7 9z" fill="#df2a33" />
                <path d="M7 9h5V5l8 7-8 8v-5H7z" fill="#4a8bd2" />
              </svg>
              要添加当前会话，点击左侧的箭头按钮。
            </button>
          </div>
          <div className="grid flex-1 grid-cols-[minmax(0,1011fr)_minmax(0,1018fr)] gap-1">
            <LocalPane />
            <RemotePane />
          </div>
          <div className="h-[3px]" />
          <TransferPanel />
          <StatusBar />
        </main>
        <DesktopRight />
      </div>
      <div className="flex h-[10px] items-start" aria-hidden="true">
        <div className="h-full w-[292px] border-r border-[#aaa]" />
        <div className="ml-[680px] h-full w-[10px] bg-[#a8a8a8]" />
        <div className="ml-[7px] mt-px h-[3px] w-[21px] rounded bg-[#4b4b60]" />
        <div className="ml-[687px] h-full w-[10px] rounded-b bg-[#a8a8a8]" />
      </div>
    </div>
  );
}
